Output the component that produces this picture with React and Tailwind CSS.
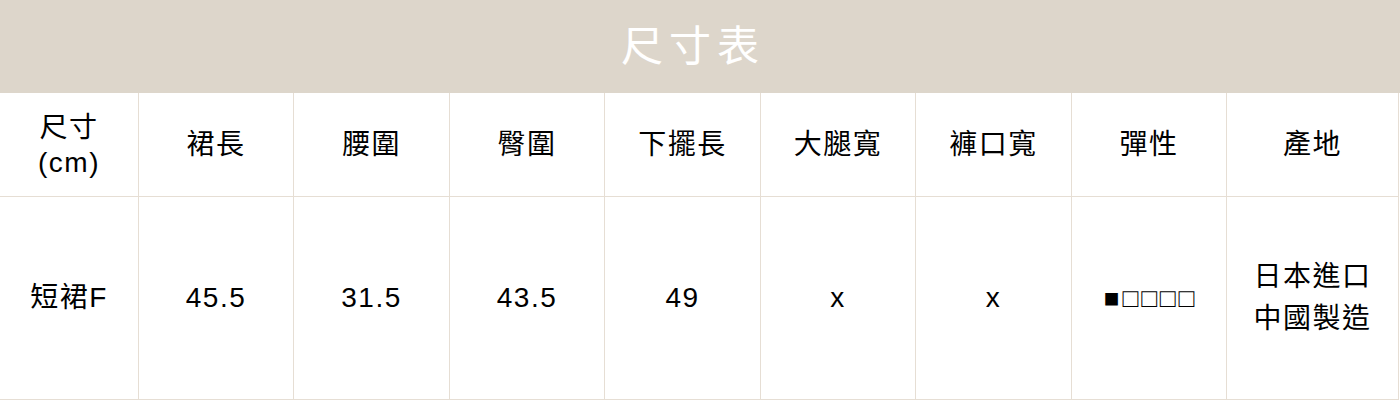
import React from "react";

const columns = [
  { label: ["尺寸", "(cm)"], value: ["短裙F"] },
  { label: ["裙長"], value: ["45.5"] },
  { label: ["腰圍"], value: ["31.5"] },
  { label: ["臀圍"], value: ["43.5"] },
  { label: ["下擺長"], value: ["49"] },
  { label: ["大腿寬"], value: ["x"] },
  { label: ["褲口寬"], value: ["x"] },
  { label: ["彈性"], value: ["■□□□□"], small: true },
  { label: ["產地"], value: ["日本進口", "中國製造"] },
];

const font = { fontFamily: '"Liberation Sans", "Noto Sans CJK TC", sans-serif' };

const App = () => {
  return (
    <div className="w-[1400px] h-[400px] bg-white text-black overflow-hidden" style={font}>
      <div className="h-[93px] bg-[#ddd6cb] flex items-center justify-center">
        <h1 className="text-[42px] leading-none tracking-[6px] text-white font-normal pr-[14px]">
          尺寸表
        </h1>
      </div>

      <div className="grid grid-cols-[139px_155px_156px_155px_156px_155px_156px_155px_172px] text-[28px] tracking-[1.5px]">
        {columns.map((col, i) => (
          <div
            key={"h" + i}
            className="h-[104px] border-r border-b border-[#e6ded4] flex flex-col items-center justify-center leading-[35px] text-center"
          >
            {col.label.map((line) => (
              <span key={line}>{line}</span>
            ))}
          </div>
        ))}
        {columns.map((col, i) => (
          <div
            key={"v" + i}
            className="h-[203px] border-r border-b border-[#e6ded4] flex flex-col items-center justify-center leading-[42px] text-center"
          >
            {col.value.map((line) => (
              <span
                key={line}
                className={col.small ? "text-[26px] tracking-[3px] pl-[3px]" : ""}
              >
                {line}
              </span>
            ))}
          </div>
        ))}
      </div>
    </div>
  );
};

export default App;
